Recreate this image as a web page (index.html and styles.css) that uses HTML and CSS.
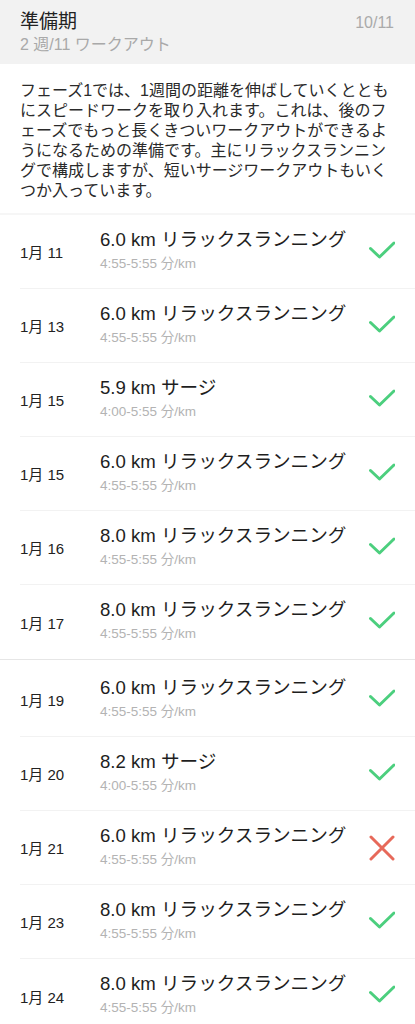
FILE: index.html
```html
<!DOCTYPE html>
<html lang="ja">
<head>
<meta charset="utf-8">
<link rel="stylesheet" href="styles.css">
</head>
<body>
<header class="phase-head">
  <div class="phase-titles">
    <div class="phase-title">準備期</div>
    <div class="phase-sub">2 週/11 ワークアウト</div>
  </div>
  <div class="phase-count">10/11</div>
</header>
<p class="desc">フェーズ1では、1週間の距離を伸ばしていくとともにスピードワークを取り入れます。これは、後のフェーズでもっと長くきついワークアウトができるようになるための準備です。主にリラックスランニングで構成しますが、短いサージワークアウトもいくつか入っています。</p>

<section class="group">
  <div class="row"><div class="date">1月 11</div><div class="info"><div class="title">6.0 km リラックスランニング</div><div class="pace">4:55-5:55 分/km</div></div><svg class="mark ok" viewBox="0 0 26 26"><path d="M1.5 9.5 L10.5 18 L25 4"/></svg></div>
  <div class="row"><div class="date">1月 13</div><div class="info"><div class="title">6.0 km リラックスランニング</div><div class="pace">4:55-5:55 分/km</div></div><svg class="mark ok" viewBox="0 0 26 26"><path d="M1.5 9.5 L10.5 18 L25 4"/></svg></div>
  <div class="row"><div class="date">1月 15</div><div class="info"><div class="title">5.9 km サージ</div><div class="pace">4:00-5:55 分/km</div></div><svg class="mark ok" viewBox="0 0 26 26"><path d="M1.5 9.5 L10.5 18 L25 4"/></svg></div>
  <div class="row"><div class="date">1月 15</div><div class="info"><div class="title">6.0 km リラックスランニング</div><div class="pace">4:55-5:55 分/km</div></div><svg class="mark ok" viewBox="0 0 26 26"><path d="M1.5 9.5 L10.5 18 L25 4"/></svg></div>
  <div class="row"><div class="date">1月 16</div><div class="info"><div class="title">8.0 km リラックスランニング</div><div class="pace">4:55-5:55 分/km</div></div><svg class="mark ok" viewBox="0 0 26 26"><path d="M1.5 9.5 L10.5 18 L25 4"/></svg></div>
  <div class="row"><div class="date">1月 17</div><div class="info"><div class="title">8.0 km リラックスランニング</div><div class="pace">4:55-5:55 分/km</div></div><svg class="mark ok" viewBox="0 0 26 26"><path d="M1.5 9.5 L10.5 18 L25 4"/></svg></div>
</section>
<section class="group second">
  <div class="row"><div class="date">1月 19</div><div class="info"><div class="title">6.0 km リラックスランニング</div><div class="pace">4:55-5:55 分/km</div></div><svg class="mark ok" viewBox="0 0 26 26"><path d="M1.5 9.5 L10.5 18 L25 4"/></svg></div>
  <div class="row"><div class="date">1月 20</div><div class="info"><div class="title">8.2 km サージ</div><div class="pace">4:00-5:55 分/km</div></div><svg class="mark ok" viewBox="0 0 26 26"><path d="M1.5 9.5 L10.5 18 L25 4"/></svg></div>
  <div class="row"><div class="date">1月 21</div><div class="info"><div class="title">6.0 km リラックスランニング</div><div class="pace">4:55-5:55 分/km</div></div><svg class="mark bad" viewBox="0 0 26 26"><path d="M2 2 L24 24 M24 2 L2 24"/></svg></div>
  <div class="row"><div class="date">1月 23</div><div class="info"><div class="title">8.0 km リラックスランニング</div><div class="pace">4:55-5:55 分/km</div></div><svg class="mark ok" viewBox="0 0 26 26"><path d="M1.5 9.5 L10.5 18 L25 4"/></svg></div>
  <div class="row"><div class="date">1月 24</div><div class="info"><div class="title">8.0 km リラックスランニング</div><div class="pace">4:55-5:55 分/km</div></div><svg class="mark ok" viewBox="0 0 26 26"><path d="M1.5 9.5 L10.5 18 L25 4"/></svg></div>
</section>
</body>
</html>
```
FILE: styles.css
```css
html, body {
  margin: 0;
  padding: 0;
  background: #ffffff;
}
body {
  font-family: "Liberation Sans", "Noto Sans CJK JP", sans-serif;
  color: #222222;
  width: 415px;
  overflow: hidden;
}
.phase-head {
  background: #f2f2f2;
  height: 64px;
  box-sizing: border-box;
  padding: 10px 21px 0 20px;
  display: flex;
  justify-content: space-between;
  align-items: flex-start;
}
.phase-title {
  font-size: 19px;
  line-height: 24px;
  color: #222;
}
.phase-sub {
  font-size: 16px;
  line-height: 22px;
  color: #a9a9a9;
}
.phase-count {
  font-size: 16px;
  line-height: 24px;
  color: #aaaaaa;
  padding-top: 1px;
}
.desc {
  margin: 0;
  padding: 17px 18px 12px 20px;
  font-size: 16px;
  line-height: 20px;
  color: #2a2a2a;
  line-break: loose;
  border-bottom: 2px solid #f6f6f6;
}
.group {
  display: flex;
  flex-direction: column;
}
.group.second {
  border-top: 1px solid #e6e6e6;
  padding-top: 3px;
}
.row {
  height: 73px;
  margin-left: 20px;
  display: flex;
  align-items: center;
  border-bottom: 1px solid #f2f2f2;
}
.group .row:last-child {
  border-bottom: none;
  height: 74px;
}
.date {
  width: 80px;
  flex: none;
  font-size: 15px;
  color: #222;
}
.info {
  flex: 1;
  display: flex;
  flex-direction: column;
  gap: 5px;
  margin-top: -4px;
}
.title {
  font-size: 18.6px;
  line-height: 23px;
  color: #1e1e1e;
}
.pace {
  font-size: 13.5px;
  line-height: 16px;
  color: #b3b3b3;
}
.mark {
  width: 26px;
  height: 26px;
  flex: none;
  margin-right: 20px;
  fill: none;
  stroke-width: 3;
  stroke-linecap: round;
  stroke-linejoin: round;
}
.mark.ok { stroke: #4ccf7e; }
.mark.bad { stroke: #e7695a; }
```
